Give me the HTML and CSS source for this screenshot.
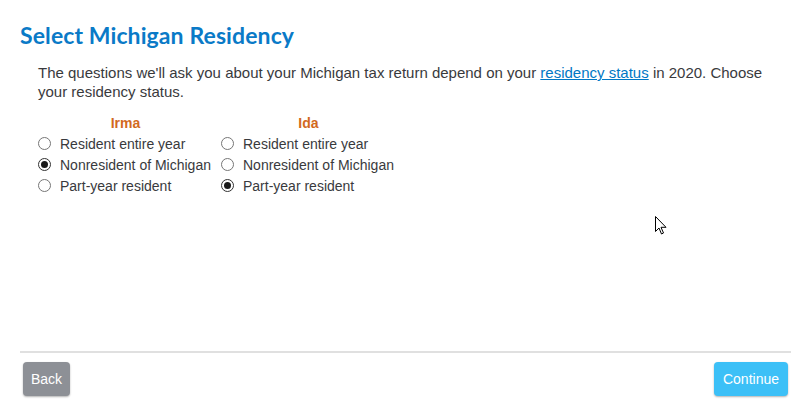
FILE: index.html
```html
<!DOCTYPE html>
<html lang="en">
<head>
<meta charset="utf-8">
<title>Select Michigan Residency</title>
<link rel="stylesheet" href="styles.css">
</head>
<body>
<div class="page">
  <main class="content">
    <h1 class="title">Select Michigan Residency</h1>
    <p class="intro">The questions we'll ask you about your Michigan tax return depend on your <a href="#" class="link">residency status</a> in 2020. Choose your residency status.</p>
    <div class="people">
      <div class="person">
        <div class="name">Irma</div>
        <div class="option"><span class="radio"></span>Resident entire year</div>
        <div class="option"><span class="radio checked"></span>Nonresident of Michigan</div>
        <div class="option"><span class="radio"></span>Part-year resident</div>
      </div>
      <div class="person">
        <div class="name">Ida</div>
        <div class="option"><span class="radio"></span>Resident entire year</div>
        <div class="option"><span class="radio"></span>Nonresident of Michigan</div>
        <div class="option"><span class="radio checked"></span>Part-year resident</div>
      </div>
    </div>
  </main>
  <footer class="footer">
    <button class="btn btn-back">Back</button>
    <button class="btn btn-continue">Continue</button>
  </footer>
  <svg class="cursor" width="12" height="20" viewBox="0 0 12 20"><path d="M0.5 0.5 L0.5 15.5 L4 12 L6.5 18 L8.5 17 L6 11.3 L11 11.3 Z" fill="#fff" stroke="#000" stroke-width="1" stroke-linejoin="miter"/></svg>
</div>
</body>
</html>
```
FILE: styles.css
```css
html, body {
  margin: 0;
  padding: 0;
  background: #fff;
}
body {
  font-family: "Liberation Sans", Arial, sans-serif;
  color: #393a3d;
}
.page {
  position: relative;
  width: 803px;
  height: 412px;
  box-sizing: border-box;
  padding: 0 12px 0 20px;
  display: flex;
  flex-direction: column;
}
.content {
  flex: 1;
}
.title {
  margin: 21px 0 0 0;
  font-family: Lato, "Open Sans", sans-serif;
  font-weight: 700;
  font-size: 23px;
  line-height: 28px;
  color: #0a7ac7;
  letter-spacing: 0.1px;
}
.intro {
  margin: 14px 0 0 18px;
  font-size: 15px;
  line-height: 19px;
  color: #393a3d;
}
.link {
  color: #0077c5;
  text-decoration: underline;
}
.people {
  display: flex;
  gap: 10px;
  margin: 14px 0 0 18px;
}
.person {
  display: flex;
  flex-direction: column;
}
.name {
  text-align: center;
  font-weight: 700;
  font-size: 14px;
  line-height: 16px;
  color: #d2691e;
  margin-bottom: 2px;
  padding-left: 2px;
}
.option {
  display: flex;
  align-items: center;
  height: 21px;
  font-size: 14px;
  color: #393a3d;
}
.radio {
  box-sizing: border-box;
  width: 13px;
  height: 13px;
  border: 1px solid #767676;
  border-radius: 50%;
  background: #fff;
  margin-right: 9px;
  display: flex;
  align-items: center;
  justify-content: center;
}
.radio.checked {
  border-color: #333;
}
.radio.checked::after {
  content: "";
  width: 7px;
  height: 7px;
  border-radius: 50%;
  background: #1a1a1a;
}
.footer {
  display: flex;
  justify-content: space-between;
  align-items: flex-start;
  border-top: 2px solid #e0e0e0;
  padding: 9px 3px 16px 3px;
}
.btn {
  font-family: "Liberation Sans", Arial, sans-serif;
  font-size: 14px;
  color: #fff;
  border: none;
  border-radius: 4px;
  height: 34px;
  padding: 0;
  box-shadow: 0 1px 2px rgba(0,0,0,0.3);
}
.btn-back {
  background: #8d9096;
  width: 47px;
}
.btn-continue {
  background: #3cc0f7;
  width: 74px;
}
.cursor {
  position: absolute;
  left: 655px;
  top: 216px;
}
```
